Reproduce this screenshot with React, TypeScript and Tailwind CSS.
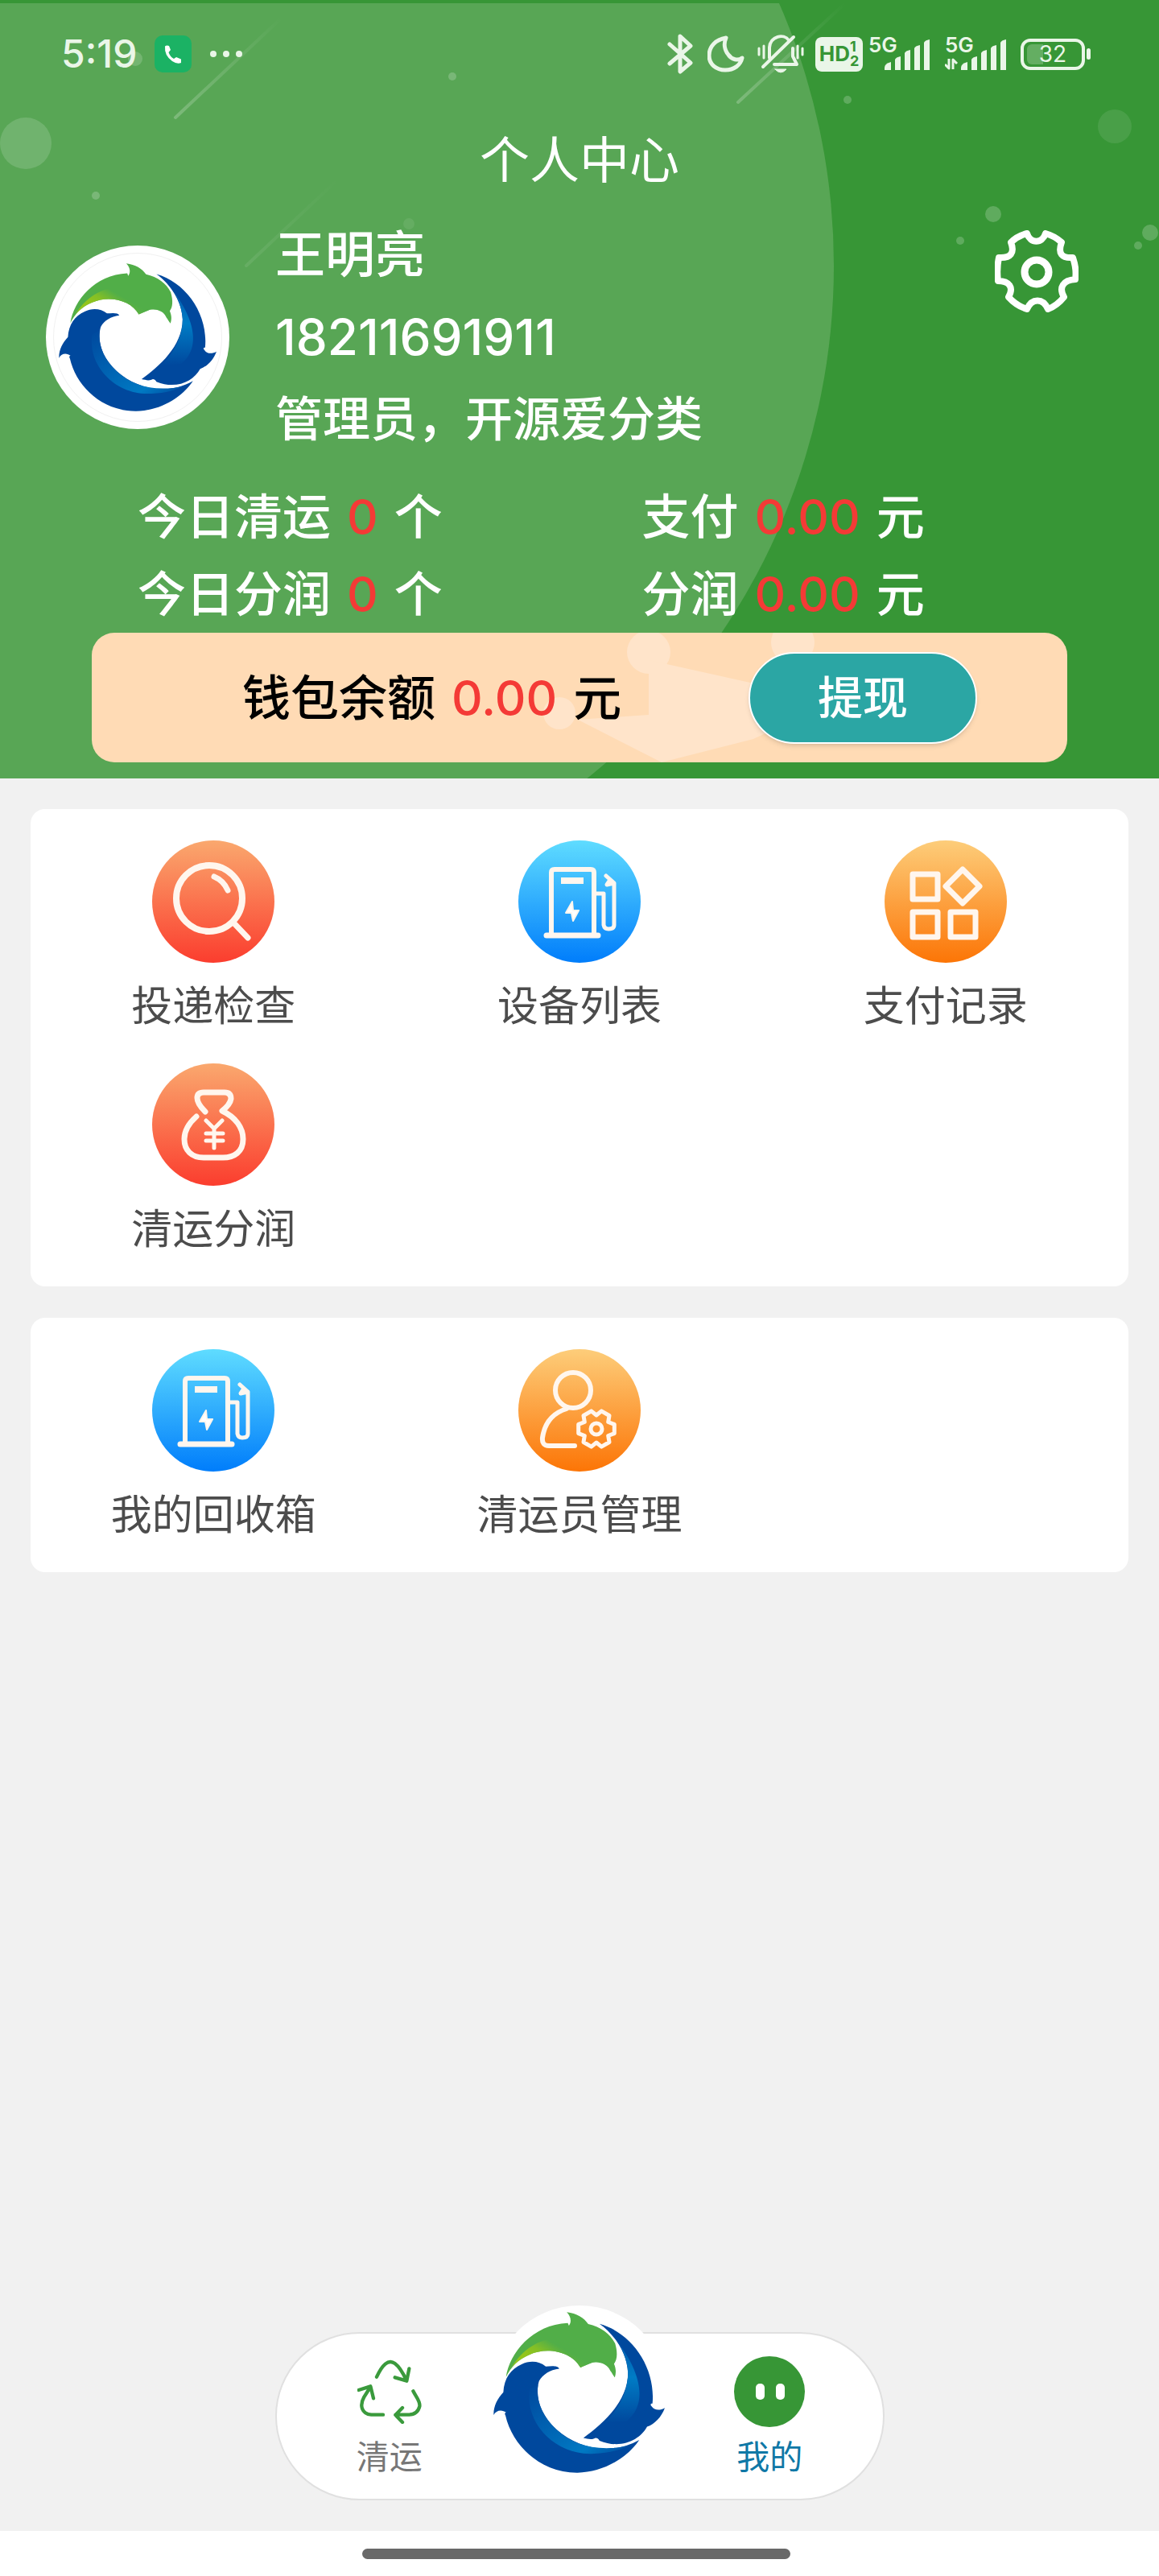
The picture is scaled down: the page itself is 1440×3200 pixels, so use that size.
import type { ReactNode } from "react";

interface MenuItem {
    label: string;
    icon: ReactNode;
}

interface StatProps {
    label: string;
    value: string;
    unit: string;
}

function BrandLogo({ className, id }: { className: string; id: string }) {
    return (
        <svg className={className} viewBox="45 63 638 599" role="img" aria-label="logo">
            <defs>
                <linearGradient id={`${id}-lime`} gradientUnits="userSpaceOnUse" x1="190" y1="235" x2="245" y2="140">
                    <stop offset="0" stopColor="#93c51c" />
                    <stop offset="0.35" stopColor="#84bf26" />
                    <stop offset="0.8" stopColor="#51ae48" />
                </linearGradient>
                <linearGradient id={`${id}-limefade`} gradientUnits="userSpaceOnUse" x1="250" y1="0" x2="430" y2="0">
                    <stop offset="0" stopColor="#51ae48" stopOpacity="0" />
                    <stop offset="1" stopColor="#51ae48" />
                </linearGradient>
                <linearGradient id={`${id}-right`} x1="0" y1="0" x2="0" y2="1">
                    <stop offset="0" stopColor="#0052a8" />
                    <stop offset="0.5" stopColor="#007cc5" />
                    <stop offset="1" stopColor="#00489d" />
                </linearGradient>
                <linearGradient id={`${id}-left`} x1="0" y1="0" x2="1" y2="1">
                    <stop offset="0" stopColor="#00489d" />
                    <stop offset="0.75" stopColor="#0079c3" />
                    <stop offset="1" stopColor="#00489d" />
                </linearGradient>
            </defs>
            <path fill="#51ae48" d="M92 305C105 215 190 110 322 104L326 114C338 98 332 78 318 64C355 68 382 85 398 108C445 118 480 145 498 180C508 215 506 240 494 256C502 275 502 290 497 306C490 300 487 290 480 282C465 245 410 240 369 270C340 215 250 190 180 222C135 240 110 270 92 305Z" />
            <path fill={`url(#${id}-lime)`} d="M112 270C160 190 240 150 310 165C360 180 400 215 415 250L369 270C340 215 250 190 180 222C150 235 130 250 112 270Z" />
            <path fill={`url(#${id}-limefade)`} d="M250 140H310C360 180 400 215 415 250L369 270C345 228 300 208 250 208Z" />
            <path fill="#00489d" d="M440 107C560 140 650 270 637 404C630 404 628 408 634 414C645 430 665 430 683 420C670 455 645 480 617 490C590 540 520 575 440 542C434 532 426 530 420 534C405 540 395 534 380 532C450 480 545 400 546 290C543 220 500 150 440 107Z" />
            <path fill={`url(#${id}-right)`} d="M475 136C570 240 640 390 540 470L460 476C520 415 546 350 546 290C543 230 515 175 475 136Z" />
            <path fill="#00489d" d="M290 274C285 262 262 264 240 266C215 245 180 243 150 258C110 275 85 310 82 362C60 385 45 415 46 446C56 428 76 424 94 438C88 436 86 442 90 448C115 560 220 662 358 661C450 660 540 610 588 539C480 600 360 570 280 500C215 440 200 370 215 320C230 295 255 278 290 274Z" />
            <path fill={`url(#${id}-left)`} d="M180 350C160 480 280 600 420 590C480 588 520 575 550 560C440 585 340 560 280 500C215 440 205 380 211 335Z" />
        </svg>
    );
}

function HeaderBackground() {
    return (
        <svg className="absolute inset-0 h-full w-full" viewBox="0 0 1440 967" preserveAspectRatio="xMidYMin slice" aria-hidden="true">
            <defs>
                <clipPath id="below-top">
                    <rect x="0" y="4" width="1440" height="963" />
                </clipPath>
                <linearGradient id="streak" x1="0" y1="1" x2="1" y2="0">
                    <stop offset="0" stopColor="#fff" stopOpacity="0.22" />
                    <stop offset="1" stopColor="#fff" stopOpacity="0" />
                </linearGradient>
            </defs>
            <rect width="1440" height="967" fill="#379636" />
            <circle cx="221" cy="330" r="815" fill="#58a655" clipPath="url(#below-top)" />
            <g stroke="url(#streak)" strokeWidth="4" strokeLinecap="round">
                <path d="M218 146L350 22" />
                <path d="M306 330L425 218" opacity="0.4" />
                <path d="M917 127L1050 4" />
            </g>
            <g fill="#fff">
                <circle cx="32" cy="178" r="32" opacity="0.15" />
                <circle cx="168" cy="73" r="9" opacity="0.17" />
                <circle cx="119" cy="243" r="5" opacity="0.2" />
                <circle cx="562" cy="95" r="5" opacity="0.2" />
                <circle cx="508" cy="278" r="7" opacity="0.08" />
                <circle cx="1053" cy="124" r="5" opacity="0.2" />
                <circle cx="1385" cy="157" r="21" opacity="0.09" />
                <circle cx="1234" cy="266" r="10" opacity="0.2" />
                <circle cx="1193" cy="299" r="5" opacity="0.2" />
                <circle cx="1429" cy="289" r="10" opacity="0.2" />
                <circle cx="1414" cy="305" r="5" opacity="0.2" />
            </g>
        </svg>
    );
}

function SignalBars({ data }: { data?: boolean }) {
    return (
        <div className="relative h-[42px] w-[76px]">
            <span className="absolute left-0 top-0 text-[26px] leading-[20px] font-semibold">5G</span>
            <svg className="absolute inset-0" viewBox="0 0 76 42" fill="currentColor" aria-hidden="true">
                {data && (
                    <path d="M5 27V39L0 34M10 40V28L15 33" fill="none" stroke="currentColor" strokeWidth="3" strokeLinejoin="round" />
                )}
                <path d="M20 41V38Q20 33 28 31V41Z" />
                <path d="M33 41V28Q34 25 40 24V41Z" />
                <path d="M45 41V20Q46 17 52 16V41Z" />
                <path d="M57 41V14Q58 11 64 10V41Z" />
                <path d="M69 41V7Q70 4 76 3V41Z" />
            </svg>
        </div>
    );
}

function StatusBar() {
    return (
        <div className="flex h-[134px] items-center justify-between pl-[76px] pr-[85px] text-[#eaf6e8]">
            <div className="flex items-center">
                <span className="w-[116px] text-[48px] font-medium leading-[48px]">5:19</span>
                <svg className="h-[46px] w-[46px]" viewBox="0 0 46 46" aria-hidden="true">
                    <rect width="46" height="46" rx="10" fill="#1bb264" />
                    <path fill="#fff" d="M13 13.500Q15 12 18 13L20 18L17.500 21Q19 26 24 29L27 27L33 29.500V34Q28 36 22 32Q12 25 13 13.500Z" />
                </svg>
                <svg className="ml-[22px] h-[10px] w-[42px]" viewBox="0 0 42 10" fill="currentColor" aria-hidden="true">
                    <circle cx="5" cy="5" r="4" />
                    <circle cx="21" cy="5" r="4" />
                    <circle cx="37" cy="5" r="4" />
                </svg>
            </div>
            <div className="flex items-center">
                <svg className="h-[50px] w-[32px]" viewBox="0 0 32 50" fill="none" stroke="currentColor" strokeWidth="5" strokeLinecap="round" strokeLinejoin="round" aria-hidden="true">
                    <path d="M3 13L29 36L16 47V3L29 15L3 37" />
                </svg>
                <svg className="ml-[18px] h-[46px] w-[46px]" viewBox="0 0 46 46" fill="none" stroke="currentColor" strokeWidth="5" strokeLinejoin="round" aria-hidden="true">
                    <path d="M23 3C10 5 2 14 2 25C2 36 11 43 22 43C33 43 41 37 43 28C38 32 30 30 26 24C21 18 20 10 23 3Z" />
                </svg>
                <svg className="ml-[16px] h-[50px] w-[58px]" viewBox="0 0 58 50" fill="none" stroke="currentColor" strokeWidth="4" strokeLinecap="round" strokeLinejoin="round" aria-hidden="true">
                    <path d="M15 30V17C16 3 33 -1 39 8M44 18V28L49 38H21M45 4L7 41" />
                    <path d="M2 18V26M8 15V30M50 15V30M56 18V26" strokeWidth="3" />
                    <path d="M22 44H36Q29 52 22 44Z" fill="currentColor" strokeWidth="1" />
                </svg>
                <div className="ml-[14px] flex h-[43px] w-[59px] items-center justify-center rounded-lg bg-[#eaf6e8] text-[#379636]">
                    <span className="text-[26px] font-bold leading-none">HD</span>
                    <span className="flex flex-col text-[18px] font-bold leading-[18px]">
                        <span>1</span>
                        <span>2</span>
                    </span>
                </div>
                <div className="ml-[7px]">
                    <SignalBars />
                </div>
                <div className="ml-[19px]">
                    <SignalBars data />
                </div>
                <div className="relative ml-[18px] flex h-[39px] w-[80px] items-center justify-center overflow-hidden rounded-[12px] border-4 border-current">
                    <span className="absolute left-[4px] h-[25px] w-[20px] rounded-l-md bg-[#eaf6e8]/25" />
                    <span className="relative text-[28px] leading-none">32</span>
                </div>
                <span className="ml-[2px] h-[14px] w-[5px] rounded-sm bg-current" />
            </div>
        </div>
    );
}

function SettingsIcon() {
    return (
        <svg className="h-[104px] w-[104px]" viewBox="-52 -52 104 104" fill="none" stroke="#fff" strokeWidth="8" strokeLinejoin="round" aria-hidden="true">
            <path d="M11 -48Q22 -45 31 -37C26 -23 31 -17 45 -18Q50 -3 48 9C33 10 27 19 34 31Q25 42 14 46C8 32 -6 32 -12 46Q-25 42 -35 31C-28 19 -34 11 -48 11Q-50 -3 -47 -18C-32 -17 -27 -24 -32 -37Q-24 -45 -12 -48C-8 -35 7 -35 11 -48Z" />
            <circle r="15" strokeWidth="9" />
        </svg>
    );
}

function Stat({ label, value, unit }: StatProps) {
    return (
        <p className="flex gap-5">
            <span>{label}</span>
            <span className="text-[#f43a36]">{value}</span>
            <span>{unit}</span>
        </p>
    );
}

function IconDisc({ id, from, to, children }: { id: string; from: string; to: string; children: ReactNode }) {
    return (
        <svg className="h-[152px] w-[152px]" viewBox="0 0 152 152" fill="none" aria-hidden="true">
            <defs>
                <linearGradient id={id} x1="0" y1="0" x2="0" y2="1">
                    <stop offset="0" stopColor={from} />
                    <stop offset="1" stopColor={to} />
                </linearGradient>
            </defs>
            <circle cx="76" cy="76" r="76" fill={`url(#${id})`} />
            <g stroke="#fff6ee" strokeWidth="7" strokeLinecap="round" strokeLinejoin="round">
                {children}
            </g>
        </svg>
    );
}

function SearchDisc() {
    return (
        <IconDisc id="disc-search" from="#faa86e" to="#fb3d2e">
            <circle cx="71" cy="72" r="41" strokeWidth="8" />
            <path d="M77 45Q89 50 94 62" />
            <path d="M100 101L119 121" />
        </IconDisc>
    );
}

function PumpDisc({ id }: { id: string }) {
    return (
        <IconDisc id={id} from="#5fdcff" to="#007dfb">
            <path d="M41 116V40Q41 36 45 36H90Q94 36 94 40V116" strokeWidth="6" />
            <path d="M35 118H99" />
            <path d="M53 50H81" strokeWidth="8" strokeLinecap="butt" />
            <path d="M67 76L59 90H66L68 100L75 87H68Z" fill="#fff" strokeWidth="2" />
            <path d="M96 66H106V105Q107 110 112 110Q119 110 119 105V53L109 44M119 53L110 55L114 49" strokeWidth="5" />
        </IconDisc>
    );
}

function GridDisc() {
    return (
        <IconDisc id="disc-grid" from="#fdcd7a" to="#fc7506">
            <rect x="35" y="42" width="31" height="31" />
            <rect x="35" y="89" width="31" height="31" />
            <rect x="82" y="89" width="31" height="31" />
            <path d="M97 36L118 57L97 78L76 57Z" />
        </IconDisc>
    );
}

function MoneyDisc() {
    return (
        <IconDisc id="disc-money" from="#faa86e" to="#fb3d2e">
            <path d="M66 60Q56 50 56 43Q56 36 64 36H90Q98 36 98 44Q97 51 87 59C104 67 113 80 113 94C113 110 102 117 88 117H64C49 117 40 108 40 94C40 84 46 74 55 66" />
            <path d="M67 71L77 81L87 71M77 81V105M67 87H88M67 96H88" strokeWidth="5" />
        </IconDisc>
    );
}

function StaffDisc() {
    // six rounded teeth around the small gear
    const teeth = [0, 60, 120, 180, 240, 300].flatMap((a) => [
        [a - 14, 23],
        [a + 14, 23],
        [a + 30, 17],
    ]);
    const points = teeth
        .map(([a, r]) => {
            const rad = (a * Math.PI) / 180;
            return `${(97 + r * Math.cos(rad)).toFixed(1)},${(99 + r * Math.sin(rad)).toFixed(1)}`;
        })
        .join(" ");

    return (
        <IconDisc id="disc-staff" from="#fdcd7a" to="#fc7506">
            <circle cx="68" cy="51" r="22" strokeWidth="6" />
            <path d="M60 74Q34 82 30 110Q29 120 38 120H70" strokeWidth="6" />
            <polygon points={points} strokeWidth="5" />
            <circle cx="97" cy="99" r="7" strokeWidth="5" />
        </IconDisc>
    );
}

function MenuCard({ items }: { items: MenuItem[] }) {
    return (
        <section className="grid grid-cols-3 rounded-[18px] bg-white pt-[39px]">
            {items.map((item) => (
                <button key={item.label} type="button" className="flex h-[277px] flex-col items-center">
                    {item.icon}
                    <span className="mt-6 text-[51px] leading-[60px] text-[#4c4c4c]">{item.label}</span>
                </button>
            ))}
        </section>
    );
}

const mainMenu: MenuItem[] = [
    { label: "投递检查", icon: <SearchDisc /> },
    { label: "设备列表", icon: <PumpDisc id="disc-device" /> },
    { label: "支付记录", icon: <GridDisc /> },
    { label: "清运分润", icon: <MoneyDisc /> },
];

const manageMenu: MenuItem[] = [
    { label: "我的回收箱", icon: <PumpDisc id="disc-box" /> },
    { label: "清运员管理", icon: <StaffDisc /> },
];

function Wallet() {
    return (
        <div className="relative mx-[114px] flex h-[161px] items-center justify-between overflow-hidden rounded-[28px] bg-[#ffdbb5] pl-[187px] pr-[112px] text-black">
            <svg className="absolute left-[560px] top-0 h-[161px] w-[360px]" viewBox="0 0 360 161" fill="#ffe4ca" aria-hidden="true">
                <circle cx="132" cy="24" r="27" />
                <circle cx="311" cy="12" r="27" />
                <circle cx="21" cy="100" r="20" />
                <path d="M44 108L132 102V34L258 62L340 40L330 100L262 132L148 161Z" />
            </svg>
            <div className="relative text-[60px] font-medium leading-[96px]">
                <Stat label="钱包余额" value="0.00" unit="元" />
            </div>
            <button type="button" className="relative h-[114px] w-[284px] rounded-full border-2 border-white bg-[#2ba6a4] text-[56px] font-medium leading-none text-white shadow-md">
                提现
            </button>
        </div>
    );
}

function TabBar() {
    return (
        <nav className="mx-auto grid h-[209px] w-[757px] grid-cols-3 rounded-full border-2 border-[#e0e0e0] bg-white px-[22px] text-[41px] leading-[48px]">
            <a href="#clear" className="flex flex-col items-center pt-[32px] text-[#777777]">
                <svg className="h-[80px] w-[80px]" viewBox="130 90 240 240" fill="none" stroke="#3a9a3c" strokeWidth="13" strokeLinecap="round" strokeLinejoin="round" aria-hidden="true">
                    <path d="M202 155C222 112 245 86 270 105C288 118 300 140 313 168M270 157L314 170L323 124" />
                    <path d="M226 296H182C146 292 137 262 155 230L179 192M135 204L179 190L190 235" />
                    <path d="M338 208C350 232 365 245 362 265C356 290 340 296 320 296H272M298 270L272 297L298 324" />
                </svg>
                <span className="mt-[17px]">清运</span>
            </a>
            <a href="#home" className="-mt-[35px] flex h-[218px] w-[218px] items-start justify-center justify-self-center rounded-full bg-white pt-[8px]" aria-label="首页">
                <BrandLogo id="tab-logo" className="h-[200px] w-[213px]" />
            </a>
            <a href="#mine" className="flex flex-col items-center pt-[28px] text-[#0f78a6]">
                <svg className="h-[89px] w-[89px]" viewBox="0 0 89 89" aria-hidden="true">
                    <circle cx="44" cy="44" r="44" fill="#379636" />
                    <rect x="27" y="34" width="11" height="20" rx="5" fill="#fff" />
                    <rect x="52" y="34" width="11" height="20" rx="5" fill="#fff" />
                </svg>
                <span className="mt-[12px]">我的</span>
            </a>
        </nav>
    );
}

export default function App() {
    return (
        <div className="flex min-h-screen flex-col bg-[#f1f1f1] font-['Inter','Noto_Sans_CJK_SC',sans-serif]">
            <header className="relative bg-[#379636] pb-5 text-white">
                <HeaderBackground />
                <div className="relative">
                    <StatusBar />
                    <h1 className="text-center text-[62px] leading-[132px]">个人中心</h1>

                    <div className="flex items-center pl-[57px] pr-[100px] font-medium">
                        <div className="flex h-[228px] w-[228px] shrink-0 items-center justify-center rounded-full bg-white">
                            <div className="flex h-[210px] w-[210px] items-center justify-center rounded-full border border-[#f1f1f1]">
                                <BrandLogo id="avatar-logo" className="h-[184px] w-[196px]" />
                            </div>
                        </div>
                        <div className="ml-[57px] flex-1 leading-[102px]">
                            <p className="text-[62px]">王明亮</p>
                            <p className="text-[62px]">18211691911</p>
                            <p className="text-[59px]">管理员，开源爱分类</p>
                        </div>
                        <button type="button" className="mt-5 self-start" aria-label="设置">
                            <SettingsIcon />
                        </button>
                    </div>

                    <div className="mt-[22px] grid grid-cols-2 pl-[171px] pr-[16px] text-[60px] font-medium leading-[96px]">
                        <Stat label="今日清运" value="0" unit="个" />
                        <Stat label="支付" value="0.00" unit="元" />
                        <Stat label="今日分润" value="0" unit="个" />
                        <Stat label="分润" value="0.00" unit="元" />
                    </div>

                    <Wallet />
                </div>
            </header>

            <main className="flex flex-1 flex-col gap-[39px] px-[38px] pt-[38px]">
                <MenuCard items={mainMenu} />
                <MenuCard items={manageMenu} />
            </main>

            <footer>
                <TabBar />
                <div className="mt-[38px] flex h-[56px] justify-center bg-white pr-2 pt-[22px]">
                    <span className="h-[13px] w-[532px] rounded-full bg-[#696969]" />
                </div>
            </footer>
        </div>
    );
}
